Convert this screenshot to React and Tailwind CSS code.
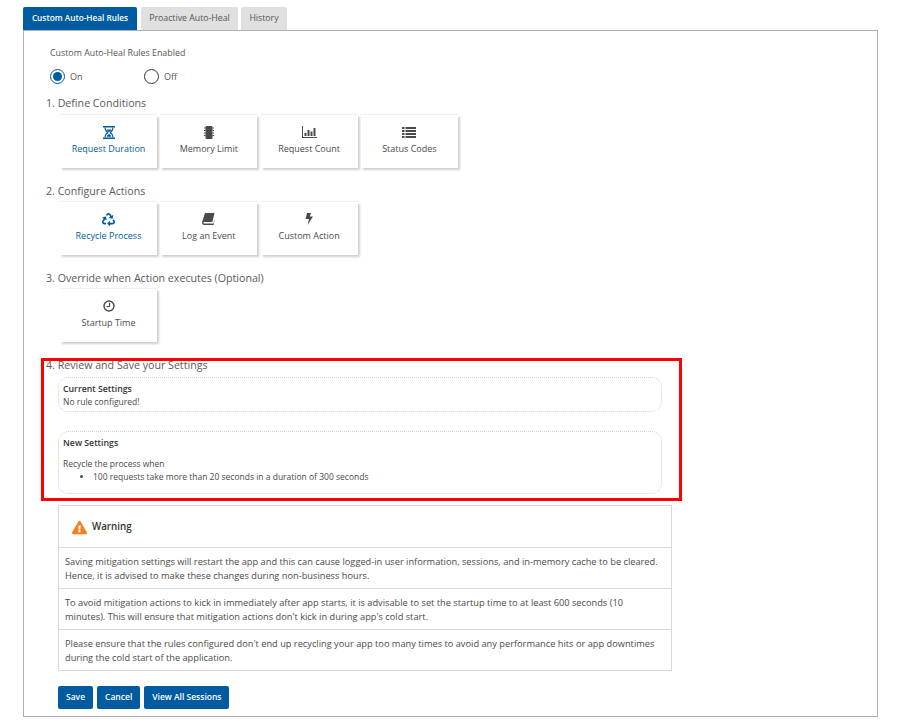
import React from 'react';
import { FaRecycle, FaExclamationTriangle } from 'react-icons/fa';

const HourglassIcon = () => (
    <svg width="12" height="13" viewBox="0 0 12 13" fill="currentColor">
        <path d="M0 0h12v1.5H0zM0 11.5h12V13H0z" />
        <path d="M1.5 1.5h1.2c0 2.2 1 3.4 2.6 4.2v1.6C3.7 8.100 2.700 9.300 2.700 11.500H1.500c0-2.600 1.100-4 2.500-5-1.400-1-2.500-2.400-2.500-5zM10.500 1.500H9.300c0 2.200-1 3.400-2.600 4.200v1.600c1.600.8 2.600 2 2.600 4.200h1.200c0-2.600-1.100-4-2.500-5 1.400-1 2.500-2.400 2.500-5z" />
        <path d="M3.500 3.500h5C8 4.800 7 5.500 6 6 5 5.500 4 4.800 3.500 3.500zM6 8c-1 .4-2 1.300-2.300 2.800h4.600C8 9.300 7 8.400 6 8z" />
    </svg>
);

const ChipIcon = () => (
    <svg width="10" height="13" viewBox="0 0 10 13" fill="currentColor">
        <rect x="1.500" y="0" width="7" height="13" rx="1" />
        <path d="M0 1.500h1.500v1H0zM0 4h1.500v1H0zM0 6.500h1.500v1H0zM0 9h1.500v1H0zM8.500 1.500H10v1H8.500zM8.500 4H10v1H8.500zM8.500 6.500H10v1H8.500zM8.500 9H10v1H8.500z" />
    </svg>
);

const BarsIcon = () => (
    <svg width="15" height="12" viewBox="0 0 15 12" fill="currentColor">
        <path d="M0 0h1v11h14v1H0z" />
        <path d="M2.500 7h2v3h-2zM5.500 4h2v6h-2zM8.500 5.500h2V10h-2zM11.500 2h2v8h-2z" />
    </svg>
);

const ListIcon = () => (
    <svg width="14" height="11" viewBox="0 0 14 11" fill="currentColor">
        <path d="M0 0h2.500v2H0zM0 3h2.500v2H0zM0 6h2.500v2H0zM0 9h2.500v2H0z" />
        <path d="M3.500 0H14v2H3.500zM3.500 3H14v2H3.500zM3.500 6H14v2H3.500zM3.500 9H14v2H3.500z" />
    </svg>
);

const BookIcon = () => (
    <svg width="13" height="12" viewBox="0 0 13 12" fill="currentColor">
        <path d="M3 0h9.500l-2.200 9H1.800C1.200 9 1.300 10.500 2 10.500h9.500l1-4v1L11.600 12H2C.4 12-.3 10.400.2 8.800z" />
    </svg>
);

const BoltIcon = () => (
    <svg width="8" height="12" viewBox="0 0 8 12" fill="currentColor">
        <path d="M2 0h4L4.800 3.500H8L2.500 12 4 6H.5z" />
    </svg>
);

const ClockIcon = () => (
    <svg width="12" height="12" viewBox="0 0 12 12" fill="none" stroke="currentColor">
        <circle cx="6" cy="6" r="5" strokeWidth="1.400" />
        <path d="M6.500 2.800V6.500H3.600" strokeWidth="1.200" />
    </svg>
);

const Card = ({ icon, label, active }) => (
    <div className={`w-[97px] h-[53px] shrink-0 bg-white flex flex-col items-center pt-[10px] shadow-[2px_2px_2px_0_#cfcfcf,0_-1px_1px_0_#f0f0f0] ${active ? 'text-[#005ba1]' : 'text-[#4a4a4a]'}`}>
        <div className="h-[14px] flex items-center justify-center text-[13px]">{icon}</div>
        <div className="mt-[3px] text-[9px] leading-[14px]">{label}</div>
    </div>
);

const Heading = ({ children }) => (
    <div className="text-[10.65px] leading-[14px] text-[#5a5a5a]">{children}</div>
);

const Radio = ({ on, label, className }) => (
    <div className={`flex items-center ${className}`}>
        <div className={`w-[15px] h-[15px] rounded-full border flex items-center justify-center ${on ? 'border-[#005ba1]' : 'border-[#333]'}`}>
            {on && <div className="w-[9px] h-[9px] rounded-full bg-[#005ba1]"></div>}
        </div>
        <span className="ml-[5px] text-[9px] text-[#555]">{label}</span>
    </div>
);

const Button = ({ children }) => (
    <button className="h-[23px] px-[8px] bg-[#005ba1] text-white text-[8.5px] font-semibold rounded-[2px]">{children}</button>
);

export default function App() {
    return (
        <div className="relative w-[904px] h-[722px] bg-white pt-[7px] pl-[23px] font-['Open_Sans',sans-serif] overflow-hidden">
            <div className="flex h-[23px] text-[8.75px]">
                <div className="w-[114px] bg-[#005ba1] text-white text-[8.25px] font-semibold flex items-center justify-center rounded-t-[2px]">Custom Auto-Heal Rules</div>
                <div className="ml-[4px] w-[97px] bg-[#e0e0e0] text-[#555] flex items-center justify-center rounded-t-[2px]">Proactive Auto-Heal</div>
                <div className="ml-[3px] w-[46px] bg-[#e0e0e0] text-[#555] flex items-center justify-center rounded-t-[2px]">History</div>
            </div>

            <div className="w-[855px] h-[687px] border border-[#b0b0b0] pl-[22px] pt-[15px] text-[#4a4a4a]">
                <div className="ml-[4px] text-[8.85px] leading-[14px] text-[#555]">Custom Auto-Heal Rules Enabled</div>
                <div className="flex mt-[9px] ml-[4px]">
                    <Radio on label="On" className="w-[94px]" />
                    <Radio label="Off" />
                </div>

                <div className="mt-[12px]"><Heading>1. Define Conditions</Heading></div>
                <div className="flex gap-[3.3px] ml-[14px] mt-[5px]">
                    <Card active icon={<HourglassIcon />} label="Request Duration" />
                    <Card icon={<ChipIcon />} label="Memory Limit" />
                    <Card icon={<BarsIcon />} label="Request Count" />
                    <Card icon={<ListIcon />} label="Status Codes" />
                </div>

                <div className="mt-[16px]"><Heading>2. Configure Actions</Heading></div>
                <div className="flex gap-[3.3px] ml-[14px] mt-[4px]">
                    <Card active icon={<FaRecycle />} label="Recycle Process" />
                    <Card icon={<BookIcon />} label="Log an Event" />
                    <Card icon={<BoltIcon />} label="Custom Action" />
                </div>

                <div className="mt-[16px]"><Heading>3. Override when Action executes (Optional)</Heading></div>
                <div className="flex ml-[14px] mt-[4px]">
                    <Card icon={<ClockIcon />} label="Startup Time" />
                </div>

                <div className="mt-[16px]"><Heading>4. Review and Save your Settings</Heading></div>

                <div className="ml-[12px] mt-[5px] w-[604px] h-[35px] rounded-[10px] border border-dotted border-[#d0d0d0] px-[4px] pt-[5px] text-[8.5px] leading-[12.500px]">
                    <div className="font-semibold text-[8.75px] text-[#333]">Current Settings</div>
                    <div>No rule configured!</div>
                </div>

                <div className="ml-[12px] mt-[19px] w-[604px] h-[63px] rounded-[10px] border border-dotted border-[#d0d0d0] px-[4px] pt-[5px] text-[8.5px] leading-[13px]">
                    <div className="font-semibold text-[8.75px] text-[#333]">New Settings</div>
                    <div className="mt-[7px]">Recycle the process when</div>
                    <ul className="list-disc pl-[30px]">
                        <li>100 requests take more than 20 seconds in a duration of 300 seconds</li>
                    </ul>
                </div>

                <div className="ml-[12px] mt-[11px] w-[614px] border border-[#d8d8d8] text-[9.25px] leading-[14px] text-[#4a4a4a]">
                    <div className="h-[42px] flex items-center pl-[13px] pt-[1px] border-b border-[#d8d8d8]">
                        <FaExclamationTriangle className="text-[#f7811e] text-[15px]" />
                        <span className="ml-[5px] text-[9.75px] font-semibold text-[#333]">Warning</span>
                    </div>
                    <div className="h-[41px] pl-[6px] pr-[8px] pt-[7px] border-b border-[#d8d8d8]">
                        Saving mitigation settings will restart the app and this can cause logged-in user information, sessions, and in-memory cache to be cleared. Hence, it is advised to make these changes during non-business hours.
                    </div>
                    <div className="h-[41px] pl-[6px] pr-[8px] pt-[7px] border-b border-[#d8d8d8]">
                        To avoid mitigation actions to kick in immediately after app starts, it is advisable to set the startup time to at least 600 seconds (10 minutes). This will ensure that mitigation actions don't kick in during app's cold start.
                    </div>
                    <div className="h-[40px] pl-[6px] pr-[8px] pt-[7px]">
                        Please ensure that the rules configured don't end up recycling your app too many times to avoid any performance hits or app downtimes during the cold start of the application.
                    </div>
                </div>

                <div className="flex gap-[4px] ml-[12px] mt-[15px]">
                    <Button>Save</Button>
                    <Button>Cancel</Button>
                    <Button>View All Sessions</Button>
                </div>
            </div>

            <div className="absolute left-[41px] top-[358px] w-[641px] h-[143px] border-[3px] border-[#ff0000]"></div>
        </div>
    );
}
